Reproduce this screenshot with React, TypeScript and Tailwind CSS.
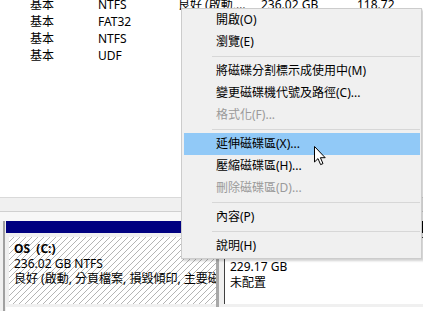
import React from "react";

const FONT = { fontFamily: "'Noto Sans','Noto Sans CJK TC',sans-serif" };

type Item = { t?: string; dis?: boolean; hl?: boolean; sep?: boolean };

const items: Item[] = [
  { t: "開啟(O)" },
  { t: "瀏覽(E)" },
  { sep: true },
  { t: "將磁碟分割標示成使用中(M)" },
  { t: "變更磁碟機代號及路徑(C)..." },
  { t: "格式化(F)...", dis: true },
  { sep: true },
  { t: "延伸磁碟區(X)...", hl: true },
  { t: "壓縮磁碟區(H)..." },
  { t: "刪除磁碟區(D)...", dis: true },
  { sep: true },
  { t: "內容(P)" },
  { sep: true },
  { t: "說明(H)" },
];

const rows = [
  ["基本", "NTFS", "良好 (啟動, 分頁檔案, 損毀傾印, 主要磁碟分割)", "236.02 GB", "118.72 GB"],
  ["基本", "FAT32", "", "", ""],
  ["基本", "NTFS", "", "", ""],
  ["基本", "UDF", "", "", ""],
];

export default function App() {
  return (
    <div
      className="relative w-[423px] h-[311px] overflow-hidden bg-white text-[12px] text-black"
      style={FONT}
    >
      {/* Top list view */}
      <div className="h-[197px] flex flex-col overflow-hidden">
        <div className="-mt-[4px]">
          {rows.map((r, i) => (
            <div key={i} className="relative h-[17px] leading-[17px] whitespace-nowrap">
              <span className="absolute left-[30px]">{r[0]}</span>
              <span className="absolute left-[98px]">{r[1]}</span>
              <span className="absolute left-[178px] w-[70px] overflow-hidden text-ellipsis">{r[2]}</span>
              <span className="absolute left-[261px] w-[80px] overflow-hidden text-ellipsis">{r[3]}</span>
              <span className="absolute left-[357px] w-[40px] overflow-hidden">{r[4]}</span>
            </div>
          ))}
        </div>
      </div>

      {/* Splitter */}
      <div className="h-px bg-[#d9d9d9]" />
      <div className="h-[13px] bg-[#f0f0f0]" />
      <div className="h-px bg-[#d0d0d0]" />
      <div className="h-[9px] bg-[#f7f7f7]" />

      {/* Graphical disk view */}
      <div className="flex h-[90px]">
        <div className="w-[5px] bg-[#f0f0f0] border-r-2 border-[#a0a0a0] shrink-0" />
        <div className="w-px shrink-0 bg-[#f0f0f0]" />
        {/* Partition 1 */}
        <div className="flex flex-col w-[213px] shrink-0">
          <div className="h-[12px] bg-[#000080]" />
          <div className="h-[74px] bg-[#f0f0f0] pl-[3px] pt-[4px] pb-[3px] border-r-[3px] border-[#a8a8a8]">
            <div className="h-full bg-white bg-[image:repeating-linear-gradient(135deg,transparent_0_3.5px,#b4b4b4_3.5px_4.24px)] pl-[5px] pt-[4px] leading-[15px] whitespace-nowrap overflow-hidden">
              <div className="font-bold">OS&nbsp;&nbsp;(C:)</div>
              <div>236.02 GB NTFS</div>
              <div>良好 (啟動, 分頁檔案, 損毀傾印, 主要磁碟分割)</div>
            </div>
          </div>
        </div>
        {/* Partition 2 */}
        <div className="flex flex-col flex-1">
          <div className="h-[12px] bg-black" />
          <div className="h-[74px] bg-[#f0f0f0] pl-[5px] pt-[4px] pb-[3px]">
            <div className="h-full bg-white border-l border-t border-[#404040] pl-[5px] pt-[5px] leading-[16px] whitespace-nowrap">
              <div>&nbsp;</div>
              <div>229.17 GB</div>
              <div>未配置</div>
            </div>
          </div>
        </div>
      </div>

      {/* Context menu */}
      <div className="absolute left-[181px] top-[8px] w-[241px] border border-[#cccccc] bg-[#f0f0f0] pl-[2px] pr-[1px] pb-px shadow-[2px_2px_2px_rgba(0,0,0,0.18)]">
        {items.map((it, i) =>
          it.sep ? (
            <div key={i} className="h-[7px] pt-[3px] pl-[28px]">
              <div className="h-px bg-[#d7d7d7]" />
            </div>
          ) : (
            <div
              key={i}
              className={
                "h-[22px] leading-[22px] pl-[32px] whitespace-nowrap " +
                (it.hl ? "bg-[#91c9f7] " : "") +
                (it.dis ? "text-[#9a9a9a]" : "text-black")
              }
            >
              {it.t}
            </div>
          )
        )}
      </div>

      {/* Mouse cursor */}
      <svg
        className="absolute left-[314px] top-[146px]"
        width="13"
        height="20"
        viewBox="0 0 13 20"
      >
        <path
          d="M0.5 0.5 L0.5 16 L4 12.6 L6.6 18.6 L9 17.6 L6.4 11.7 L11.2 11.7 Z"
          fill="white"
          stroke="black"
          strokeWidth="1"
          strokeLinejoin="miter"
        />
      </svg>
    </div>
  );
}
